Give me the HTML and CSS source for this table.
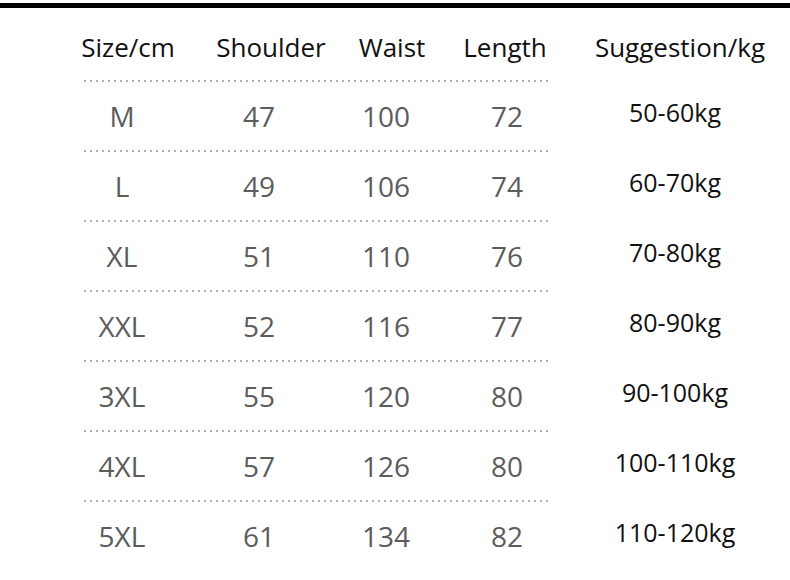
FILE: index.html
```html
<!DOCTYPE html>
<html>
<head>
<meta charset="utf-8">
<link rel="stylesheet" href="styles.css">
</head>
<body>
<div class="topbar"></div>
<div class="chart">
  <div class="row head">
    <div>Size/cm</div><div>Shoulder</div><div>Waist</div><div>Length</div><div>Suggestion/kg</div>
  </div>
  <div class="dots"></div>
  <div class="row data"><div>M</div><div>47</div><div>100</div><div>72</div><div class="sug">50-60kg</div></div>
  <div class="dots"></div>
  <div class="row data"><div>L</div><div>49</div><div>106</div><div>74</div><div class="sug">60-70kg</div></div>
  <div class="dots"></div>
  <div class="row data"><div>XL</div><div>51</div><div>110</div><div>76</div><div class="sug">70-80kg</div></div>
  <div class="dots"></div>
  <div class="row data"><div>XXL</div><div>52</div><div>116</div><div>77</div><div class="sug">80-90kg</div></div>
  <div class="dots"></div>
  <div class="row data"><div>3XL</div><div>55</div><div>120</div><div>80</div><div class="sug">90-100kg</div></div>
  <div class="dots"></div>
  <div class="row data"><div>4XL</div><div>57</div><div>126</div><div>80</div><div class="sug">100-110kg</div></div>
  <div class="dots"></div>
  <div class="row data"><div>5XL</div><div>61</div><div>134</div><div>82</div><div class="sug">110-120kg</div></div>
</div>
</body>
</html>
```
FILE: styles.css
```css
html, body {
  margin: 0;
  padding: 0;
  background: #fff;
}
body {
  width: 790px;
  height: 580px;
  overflow: hidden;
  font-family: "Open Sans", "Noto Sans", sans-serif;
}
.topbar {
  margin-top: 3px;
  height: 5px;
  background: #000;
}
.chart {
  display: flex;
  flex-direction: column;
}
.row {
  display: grid;
  padding-left: 60px;
  align-items: center;
  text-align: center;
  white-space: nowrap;
}
.head {
  grid-template-columns: 136px 150px 92px 134px 216px;
  height: 66px;
  padding-top: 6px;
  font-size: 26px;
  color: #111;
}
.data {
  grid-template-columns: 124px 150px 104px 138px 198px;
  height: 68px;
  font-size: 28px;
  color: #5c5c5c;
}
.data .sug {
  font-size: 25px;
  color: #111;
  padding-bottom: 8px;
}
.dots {
  margin-left: 84px;
  width: 468px;
  height: 2px;
  background-image: linear-gradient(to right, #b0b0b0 2px, transparent 2px);
  background-size: 6px 2px;
}
```
